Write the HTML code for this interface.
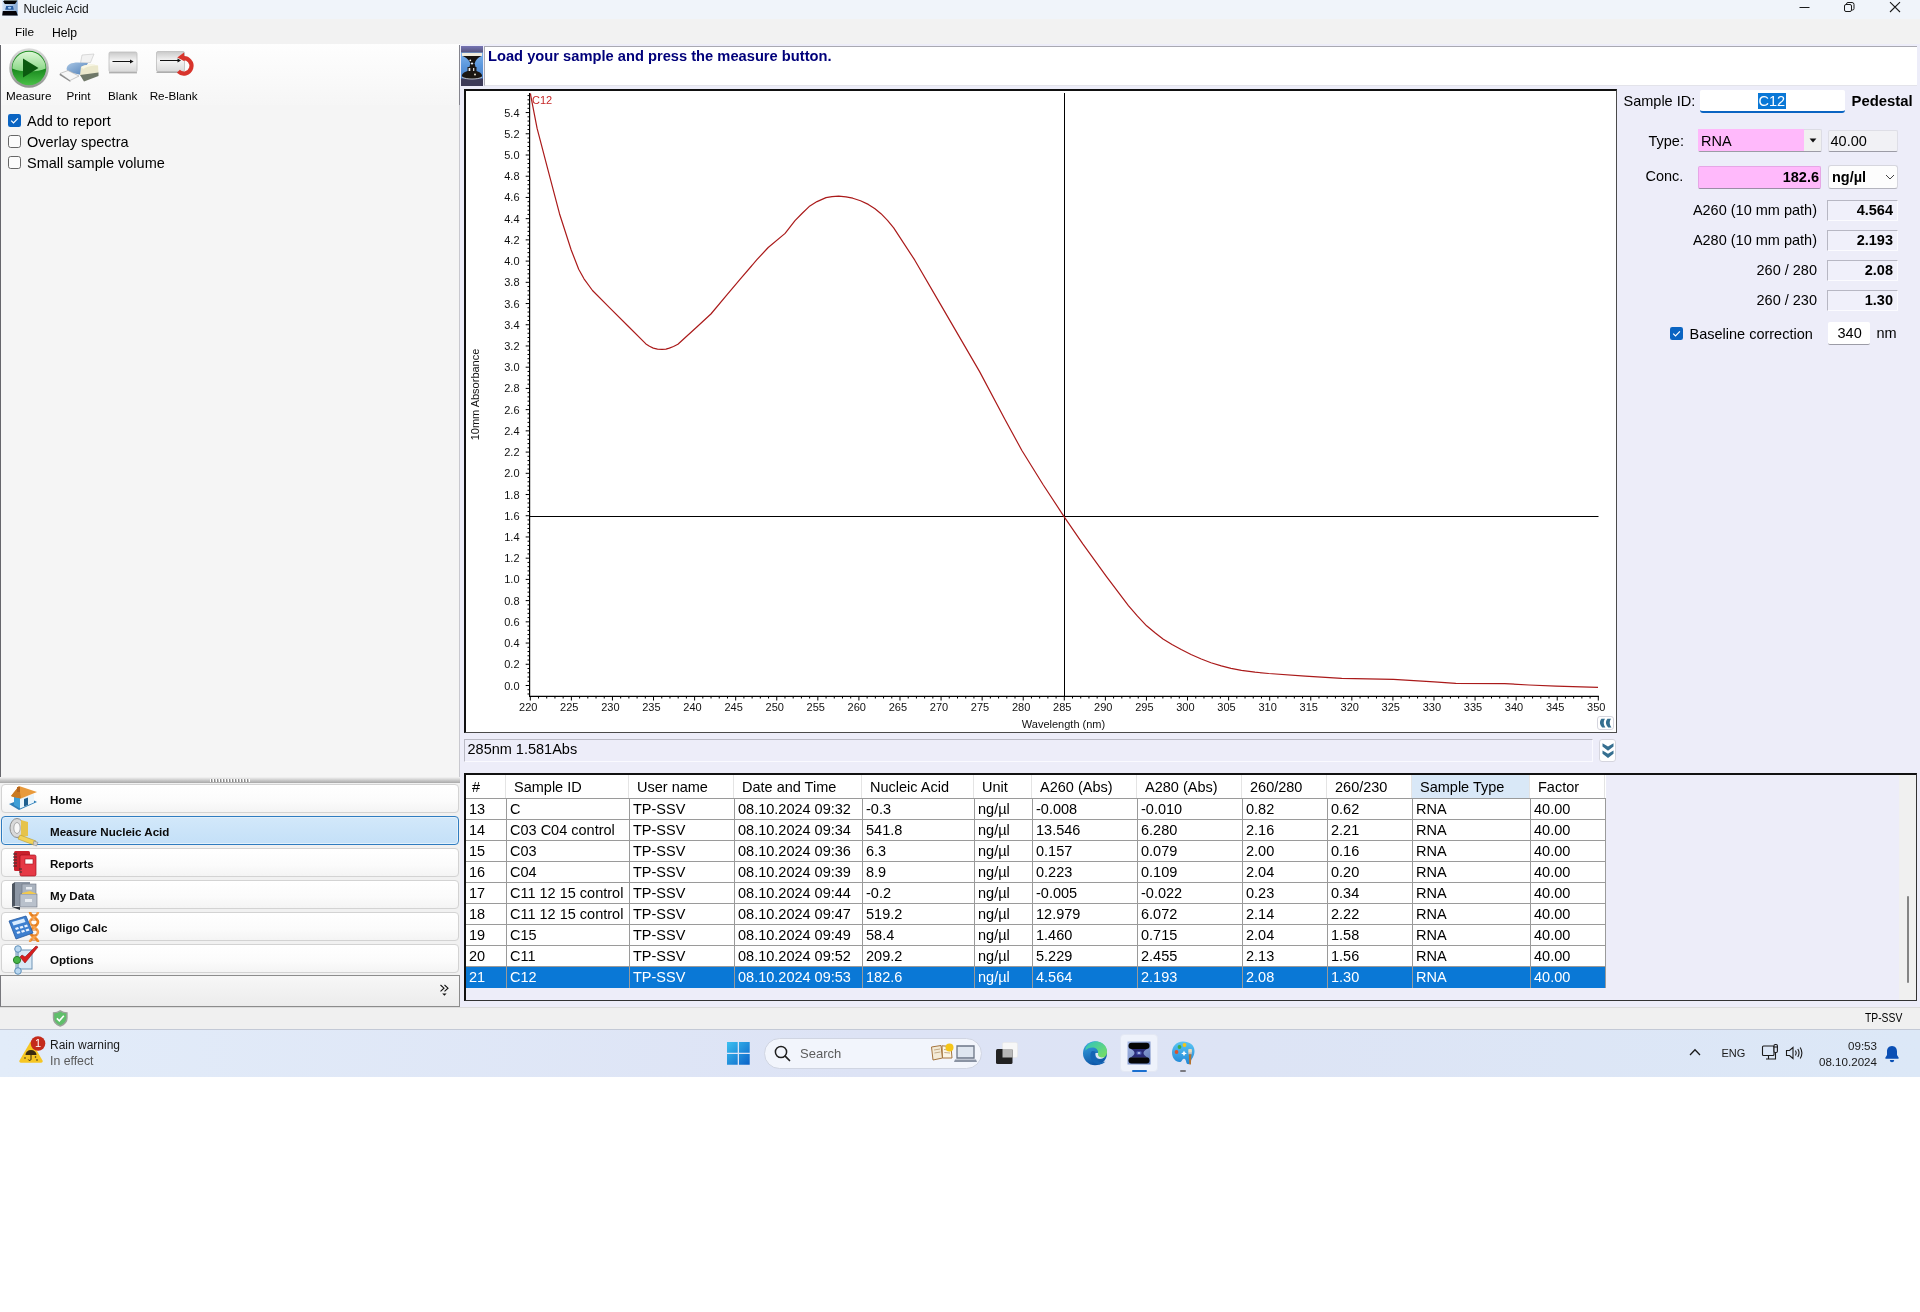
<!DOCTYPE html><html><head><meta charset="utf-8"><title>Nucleic Acid</title><style>
*{box-sizing:border-box;margin:0;padding:0}
html,body{width:1920px;height:1312px;background:#fff;overflow:hidden}
body{position:relative;font-family:"Liberation Sans",sans-serif;color:#000;}
.a{position:absolute}
.t{position:absolute;white-space:nowrap;line-height:1}
.ui{font-family:"Liberation Sans",sans-serif;font-size:12px;color:#000}
.ms{font-family:"Liberation Sans",sans-serif;font-size:14.5px;color:#000}
.b{font-weight:bold}
</style></head><body><div id="root" style="position:absolute;left:0;top:0;width:1920px;height:1312px;will-change:transform">
<div class="a" style="left:0;top:0;width:1920px;height:19px;background:#f0f4fa"></div>
<div class="a" style="left:0;top:19px;width:1920px;height:25px;background:#f2f2f2"></div>
<div class="a" style="left:0;top:44px;width:1920px;height:963px;background:#ededf9"></div>
<div class="a" style="left:0;top:44px;width:460px;height:963px;background:#f5f5f5"></div>
<div class="a" style="left:0;top:1007px;width:1920px;height:23px;background:#f0f0f0"></div>
<div class="a" style="left:0;top:1029px;width:1920px;height:48px;background:linear-gradient(90deg,#e2ecf9,#dde3f5 45%,#dde4f5 65%,#dce8f7);border-top:1px solid #c3c9d6"></div>
<svg class="a" style="left:2px;top:0" width="16" height="16" viewBox="0 0 16 16">
<defs><linearGradient id="ti" x1="0" y1="0" x2="1" y2="0"><stop offset="0" stop-color="#d3e4f8"/><stop offset="1" stop-color="#86a9d2"/></linearGradient></defs>
<rect x="0.300" y="0" width="15.400" height="15.600" fill="url(#ti)"/><rect x="2" y="0" width="13" height="1.200" fill="#6f7a78"/>
<path d="M1 1.100H15L13 3.900H2.800Z" fill="#050505"/>
<path d="M4.200 6.100H11L11.800 9.700H3.200Z" fill="#2a5ea2"/><ellipse cx="7.600" cy="7.800" rx="1.700" ry="1" fill="#aed6ff"/>
<path d="M0.800 10.900H14.200L15.800 15.600H0.200Z" fill="#04040a"/></svg>
<div class="t ui" style="left:23.4px;top:3px;font-size:12px;color:#111">Nucleic Acid</div>
<svg class="a" style="left:1790px;top:0" width="120" height="18" viewBox="0 0 120 18" fill="none" stroke="#1a1a1a" stroke-width="1">
<path d="M9.5 7.5H19.5"/>
<rect x="54.5" y="4.5" width="7" height="7" rx="1.5"/><path d="M56.5 4.5V4a1.5 1.5 0 0 1 1.5-1.5h4A2 2 0 0 1 64 4.5v4A1.5 1.5 0 0 1 62.5 10H62"/>
<path d="M100 2.2L110 12M110 2.2L100 12" stroke-width="1.1"/></svg>
<div class="t ui" style="left:15px;top:26.7px;font-size:11.8px">File</div>
<div class="t ui" style="left:52px;top:26.7px;font-size:12.2px">Help</div>
<div class="a" style="left:0;top:44px;width:460px;height:61px;background:linear-gradient(#fefefe,#f6f6f6)"></div>
<div class="a" style="left:0;top:45px;width:1px;height:732px;background:#66666c"></div>
<div class="a" style="left:459px;top:45px;width:1px;height:735px;background:#c9c9cf"></div>
<div class="a" style="left:459px;top:45px;width:1px;height:60px;background:#85858e"></div>
<svg class="a" style="left:8px;top:47px" width="42" height="42" viewBox="0 0 42 42">
<defs><linearGradient id="mg" x1="0" y1="0" x2="0" y2="1"><stop offset="0" stop-color="#1d8f20"/><stop offset="0.5" stop-color="#16851b"/><stop offset="1" stop-color="#48c046"/></linearGradient>
<linearGradient id="mt" x1="0" y1="0" x2="0" y2="1"><stop offset="0" stop-color="#dcf6d6"/><stop offset="1" stop-color="#86d682"/></linearGradient>
<linearGradient id="mr" x1="0" y1="0" x2="0" y2="1"><stop offset="0" stop-color="#dcdcdc"/><stop offset="1" stop-color="#8e948e"/></linearGradient></defs>
<circle cx="21" cy="21" r="19.800" fill="url(#mr)"/><circle cx="21" cy="21" r="17.200" fill="url(#mg)"/>
<path d="M4.300 21.500A16.700 16.700 0 0 1 37.700 21.500C30 25.500 12 25.500 4.300 21.500Z" fill="url(#mt)"/>
<path d="M15 11.500L30.500 21L15 30.500Z" fill="#0b5a10"/></svg>
<svg class="a" style="left:58px;top:52px" width="42" height="32" viewBox="0 0 42 32">
<defs><linearGradient id="pb" x1="0" y1="0" x2="1" y2="1"><stop offset="0" stop-color="#a9c6e4"/><stop offset="1" stop-color="#4f7fb8"/></linearGradient></defs>
<path d="M24 3L36 2L32.500 10.500L22.500 11Z" fill="#f2f2f2" stroke="#c4c4c4" stroke-width=".6"/>
<path d="M8.500 17C9 12.500 13 10.500 20 10.500L30 11L23.500 23L10 20Z" fill="url(#pb)"/>
<path d="M23 15C26 12.500 34 11.500 40 13.500L40.500 21L26 27L22 23Z" fill="#ebe8cc"/>
<path d="M23 15C26 12.500 34 11.500 40 13.500C35 13.200 28 14.500 25.500 17Z" fill="#f8f6e4"/>
<path d="M22 23L40.500 20.500V24L26 29.500Z" fill="#6f7868"/>
<path d="M2 21.500L10 18.500L21 24L12 28.500Z" fill="#f7f7f7" stroke="#b0b0b0" stroke-width=".7"/>
<path d="M2 21.500L12 28.500L12.500 30L1.500 23Z" fill="#8a8a8a"/></svg>
<svg class="a" style="left:107px;top:50px" width="34" height="26" viewBox="0 0 34 26">
<defs><linearGradient id="bg1" x1="0" y1="0" x2="0" y2="1"><stop offset="0" stop-color="#c9c9c9"/><stop offset="0.45" stop-color="#f4f4f4"/><stop offset="1" stop-color="#d9d9d9"/></linearGradient></defs>
<rect x="2" y="2" width="28" height="20" rx="1.5" fill="url(#bg1)" stroke="#bdbdbd" stroke-width=".8"/>
<path d="M2 22.8H30" stroke="#9a9a9a" stroke-width="1"/>
<path d="M5.5 11.5H24" stroke="#111" stroke-width="1"/><path d="M23 9.6L26.6 11.5L23 13.4Z" fill="#111"/></svg>
<svg class="a" style="left:154px;top:49px" width="44" height="30" viewBox="0 0 44 30">
<rect x="2.5" y="2.5" width="28" height="20" rx="1.5" fill="url(#bg1)" stroke="#bdbdbd" stroke-width=".8"/>
<path d="M2.5 23.3H30" stroke="#9a9a9a" stroke-width="1"/>
<path d="M6 11.5H24" stroke="#111" stroke-width="1"/><path d="M23.5 9.6L27 11.5L23.5 13.4Z" fill="#111"/>
<path d="M28.46 9.32A7.700 7.700 0 1 1 24.36 22.34" fill="none" stroke="#d8342c" stroke-width="4.200"/>
<path d="M23.300 8.400L30 3.600L30.600 12.200Z" fill="#d8342c"/></svg>
<div class="t ui" style="left:-11.3px;top:89.6px;width:80px;text-align:center;font-size:11.7px">Measure</div>
<div class="t ui" style="left:38.6px;top:89.6px;width:80px;text-align:center;font-size:11.7px">Print</div>
<div class="t ui" style="left:82.7px;top:89.6px;width:80px;text-align:center;font-size:11.7px">Blank</div>
<div class="t ui" style="left:133.7px;top:89.6px;width:80px;text-align:center;font-size:11.7px">Re-Blank</div>
<svg class="a" style="left:8px;top:114.2px" width="13" height="13" viewBox="0 0 13 13"><rect x="0" y="0" width="13" height="13" rx="2.2" fill="#0a64c2"/><path d="M3.2 6.7L5.5 9L9.9 4.3" fill="none" stroke="#fff" stroke-width="1.2"/></svg>
<svg class="a" style="left:8px;top:135.2px" width="13" height="13" viewBox="0 0 13 13"><rect x="0.5" y="0.5" width="12" height="12" rx="2.2" fill="#fbfbfb" stroke="#666"/></svg>
<svg class="a" style="left:8px;top:156.2px" width="13" height="13" viewBox="0 0 13 13"><rect x="0.5" y="0.5" width="12" height="12" rx="2.2" fill="#fbfbfb" stroke="#666"/></svg>
<div class="t ms" style="left:27px;top:113.5px">Add to report</div>
<div class="t ms" style="left:27px;top:134.5px">Overlay spectra</div>
<div class="t ms" style="left:27px;top:155.5px">Small sample volume</div>
<div class="a" style="left:0;top:777px;width:460px;height:6px;background:linear-gradient(#f5f5f5,#c9c9c9 55%,#a8a8a8)"></div>
<div class="a" style="left:210px;top:779px;width:40px;height:3px;background:repeating-linear-gradient(90deg,#fff 0 1px,#8a8a8a 1px 2px,transparent 2px 3px)"></div>
<div class="a" style="left:0px;top:783px;width:460px;height:193px;background:#f1f1f1"></div>
<div class="a" style="left:1px;top:784px;width:458px;height:29px;border-radius:4px;background:linear-gradient(#ffffff,#fbfbfb 60%,#f4f4f4);border:1px solid #d3d3d3"><svg class="a" style="left:5px;top:-1px" width="32" height="30" viewBox="0 0 32 30">
<path d="M2 20L12 26L30 18L20 13Z" fill="#2f7fb8"/><path d="M7 12V21L13 24.5V14Z" fill="#3f9fd6"/><path d="M13 14V24.5L27 18.5V10Z" fill="#e9f4fb"/>
<path d="M4 12L12 2L30 8L14 14.5Z" fill="#e89a3c"/><path d="M4 12L12 2L14 14.5L6 13Z" fill="#c97a22"/>
<rect x="10" y="3" width="3" height="5" fill="#b5651d"/><path d="M17 15L21 13.5V21L17 22.5Z" fill="#1f5f8f"/></svg><div class="t b" style="left:48px;top:9px;font-size:11.6px;color:#0a0a0a">Home</div></div>
<div class="a" style="left:1px;top:816px;width:458px;height:29px;border-radius:4px;background:linear-gradient(#d2e8fa,#c4e0f8);border:1px solid #2f7cc0;box-shadow:inset 0 0 0 1px #e2f1fc"><svg class="a" style="left:6px;top:0px" width="34" height="30" viewBox="0 0 34 30">
<ellipse cx="9" cy="11" rx="7" ry="9.5" fill="#d9d9d9" stroke="#8d8d8d"/><ellipse cx="9" cy="11" rx="3.2" ry="5.5" fill="#f7f7f7" stroke="#aaa"/>
<path d="M13 3L20 5V19L13 20Z" fill="#e6c34a"/><path d="M12 18L28 24L26 28L10 22Z" fill="#f2d35a" stroke="#b89a2a" stroke-width=".6"/>
<path d="M26 24L30 25.5L28.5 29L25 27.5Z" fill="#cfcfcf" stroke="#888" stroke-width=".6"/></svg><div class="t b" style="left:48px;top:9px;font-size:11.6px;color:#0a0a0a">Measure Nucleic Acid</div></div>
<div class="a" style="left:1px;top:848px;width:458px;height:29px;border-radius:4px;background:linear-gradient(#ffffff,#fbfbfb 60%,#f4f4f4);border:1px solid #d3d3d3"><svg class="a" style="left:9px;top:1px" width="28" height="28" viewBox="0 0 28 28">
<rect x="3" y="1" width="16" height="20" rx="1.5" fill="#c8202c"/><rect x="9" y="5" width="16" height="21" rx="1.5" fill="#e63946" stroke="#a0101c" stroke-width=".7"/>
<rect x="14" y="9" width="8" height="5" fill="#fff" stroke="#a0101c" stroke-width=".6"/>
<path d="M2 4H6M2 7H6M2 10H6M2 13H6M2 16H6M8 19H11M8 22H11" stroke="#333" stroke-width="1"/></svg><div class="t b" style="left:48px;top:9px;font-size:11.6px;color:#0a0a0a">Reports</div></div>
<div class="a" style="left:1px;top:880px;width:458px;height:29px;border-radius:4px;background:linear-gradient(#ffffff,#fbfbfb 60%,#f4f4f4);border:1px solid #d3d3d3"><svg class="a" style="left:8px;top:0px" width="30" height="30" viewBox="0 0 30 30">
<path d="M5 1H20V26L5 25Z" fill="#8d97a5"/><path d="M5 1L2 3V26L5 25Z" fill="#4d5560"/>
<rect x="12" y="3" width="14" height="10" fill="#aab3bf" stroke="#6b7480" stroke-width=".6"/><rect x="16" y="6" width="6" height="2.5" fill="#e9edf2"/>
<rect x="10" y="13" width="17" height="13" fill="#b9c1cc" stroke="#6b7480" stroke-width=".6"/><path d="M12 12L20 10L27 13H12Z" fill="#f2c94c"/>
<rect x="15" y="18" width="7" height="3" fill="#e9edf2"/><path d="M2 26L10 29V26" fill="#30363d"/></svg><div class="t b" style="left:48px;top:9px;font-size:11.6px;color:#0a0a0a">My Data</div></div>
<div class="a" style="left:1px;top:912px;width:458px;height:29px;border-radius:4px;background:linear-gradient(#ffffff,#fbfbfb 60%,#f4f4f4);border:1px solid #d3d3d3"><svg class="a" style="left:6px;top:-2px" width="32" height="32" viewBox="0 0 32 32">
<path d="M22 1C22 6 30 6 30 11S22 16 22 21S30 26 30 31" fill="none" stroke="#f08a24" stroke-width="2.6"/><path d="M30 1C30 6 22 6 22 11S30 16 30 21S22 26 22 31" fill="none" stroke="#f5a04a" stroke-width="2.4"/><path d="M23 4H29M23 9H29M23 14H29M23 19H29M23 24H29M23 29H29" stroke="#d9731a" stroke-width="1"/>
<path d="M1 10L18 5L25 22L8 28Z" fill="#3d7fcf" stroke="#2458a0" stroke-width=".8"/><path d="M4 11L16 7.5L17.5 11L5.5 14.5Z" fill="#d9ecff"/>
<path d="M7 17l3-1 1 2-3 1zM11.5 15.7l3-1 1 2-3 1zM16 14.4l3-1 1 2-3 1zM8.5 21l3-1 1 2-3 1zM13 19.7l3-1 1 2-3 1zM17.5 18.4l3-1 1 2-3 1z" fill="#eaf3ff"/></svg><div class="t b" style="left:48px;top:9px;font-size:11.6px;color:#0a0a0a">Oligo Calc</div></div>
<div class="a" style="left:1px;top:944px;width:458px;height:29px;border-radius:4px;background:linear-gradient(#ffffff,#fbfbfb 60%,#f4f4f4);border:1px solid #d3d3d3"><svg class="a" style="left:6.5px;top:-1px" width="32" height="32" viewBox="0 0 32 32">
<rect x="7" y="6" width="16" height="19" fill="#d8e8f5" stroke="#6f94b5"/><path d="M9 4V28" stroke="#6f94b5" stroke-width="1.2"/>
<circle cx="9" cy="5" r="3.3" fill="#b9d7f0" stroke="#5f8fb8"/><circle cx="9" cy="27" r="3.3" fill="#b9d7f0" stroke="#5f8fb8"/><circle cx="8" cy="16" r="3.6" fill="#47b648" stroke="#2a7f2c"/>
<path d="M11 13L16 19L29 3L27 2L16 13L13 11Z" fill="#d81e1e" stroke="#8f0f0f" stroke-width=".6"/></svg><div class="t b" style="left:48px;top:9px;font-size:11.6px;color:#0a0a0a">Options</div></div>
<div class="a" style="left:0;top:975px;width:460px;height:32px;background:linear-gradient(#f7f7f7,#ececec);border:1px solid #8c8c8c;border-left:1px solid #77777c"></div>
<svg class="a" style="left:438px;top:983px" width="14" height="14" viewBox="0 0 14 14"><path d="M2.5 2L6 5.2L2.5 8.4M6.5 2L10 5.2L6.5 8.4" fill="none" stroke="#111" stroke-width="1.1"/><path d="M4.2 10.5H8.6L6.4 12.8Z" fill="#111"/></svg>
<div class="a" style="left:484px;top:46px;width:1433px;height:40px;background:#fff;border-top:1px solid #a9a9b2;border-left:1px solid #a9a9b2;border-bottom:1px solid #e3e3ea"></div>
<svg class="a" style="left:461px;top:46px" width="22" height="40" viewBox="0 0 22 40">
<defs><linearGradient id="pi" x1="0" y1="0" x2="0" y2="1"><stop offset="0" stop-color="#8fc0f2"/><stop offset="0.5" stop-color="#5b97dc"/><stop offset="1" stop-color="#3f74bf"/></linearGradient>
<linearGradient id="pt" x1="0" y1="0" x2="0" y2="1"><stop offset="0" stop-color="#7674b4"/><stop offset="1" stop-color="#55547c"/></linearGradient></defs>
<rect width="22" height="40" fill="url(#pi)"/><rect width="22" height="6.500" fill="url(#pt)"/><rect y="32.500" width="22" height="7.500" fill="#3c3a58"/>
<rect x="1" y="7" width="20" height="3" fill="#f1ecdc"/>
<path d="M1.500 10H20.500C17 11.500 14.500 14 13.700 17.500H9.300C8.500 14 5 11.500 1.500 10Z" fill="#16120e"/>
<path d="M9.300 17.500H13.700L14.500 21H15.500V25C19 26 21.500 28 21 30.500C20 32.500 16 33 11 33C6 33 2 32.500 1 30.500C0.500 28 3 26 6.500 25V21H8.500Z" fill="#1a1612"/>
<circle cx="9.300" cy="14.300" r="0.900" fill="#fff"/><circle cx="11" cy="17.500" r="1.100" fill="#e8eef6"/><rect x="7.600" y="22" width="1.700" height="3" fill="#f2f2f2"/><rect x="12" y="22" width="1.300" height="3" fill="#cfcfcf"/><circle cx="14" cy="28.500" r="0.900" fill="#f6f0d8"/>
<path d="M1 31C3 32.500 7 33 11 33C15 33 19 32.500 21 31" fill="none" stroke="#dfe6ee" stroke-width="0.800"/></svg>
<div class="t b" style="left:488px;top:47.8px;font-size:15.2px;color:#00007a;transform:scaleX(.967);transform-origin:0 0">Load your sample and press the measure button.</div>
<div class="a" style="left:464px;top:89px;width:1153px;height:644px;background:#fff;border:2px solid #111;border-right:1px solid #4a4a4a;border-bottom:1px solid #4a4a4a"></div>
<svg class="a" style="left:0;top:0" width="1920" height="760" viewBox="0 0 1920 760" font-family="Liberation Sans, sans-serif" font-size="11" fill="#111">
<path d="M529.6 93V696.3H1598.9" fill="none" stroke="#000" stroke-width="1.2"/>
<path d="M529.3 693.99h-1.8M529.3 689.74h-1.8M529.3 685.50h-3.6M529.3 681.26h-1.8M529.3 677.01h-1.8M529.3 672.77h-1.8M529.3 668.52h-1.8M529.3 664.28h-3.6M529.3 660.04h-1.8M529.3 655.79h-1.8M529.3 651.55h-1.8M529.3 647.30h-1.8M529.3 643.06h-3.6M529.3 638.82h-1.8M529.3 634.57h-1.8M529.3 630.33h-1.8M529.3 626.08h-1.8M529.3 621.84h-3.6M529.3 617.60h-1.8M529.3 613.35h-1.8M529.3 609.11h-1.8M529.3 604.86h-1.8M529.3 600.62h-3.6M529.3 596.38h-1.8M529.3 592.13h-1.8M529.3 587.89h-1.8M529.3 583.64h-1.8M529.3 579.40h-3.6M529.3 575.16h-1.8M529.3 570.91h-1.8M529.3 566.67h-1.8M529.3 562.42h-1.8M529.3 558.18h-3.6M529.3 553.94h-1.8M529.3 549.69h-1.8M529.3 545.45h-1.8M529.3 541.20h-1.8M529.3 536.96h-3.6M529.3 532.72h-1.8M529.3 528.47h-1.8M529.3 524.23h-1.8M529.3 519.98h-1.8M529.3 515.74h-3.6M529.3 511.50h-1.8M529.3 507.25h-1.8M529.3 503.01h-1.8M529.3 498.76h-1.8M529.3 494.52h-3.6M529.3 490.28h-1.8M529.3 486.03h-1.8M529.3 481.79h-1.8M529.3 477.54h-1.8M529.3 473.30h-3.6M529.3 469.06h-1.8M529.3 464.81h-1.8M529.3 460.57h-1.8M529.3 456.32h-1.8M529.3 452.08h-3.6M529.3 447.84h-1.8M529.3 443.59h-1.8M529.3 439.35h-1.8M529.3 435.10h-1.8M529.3 430.86h-3.6M529.3 426.62h-1.8M529.3 422.37h-1.8M529.3 418.13h-1.8M529.3 413.88h-1.8M529.3 409.64h-3.6M529.3 405.40h-1.8M529.3 401.15h-1.8M529.3 396.91h-1.8M529.3 392.66h-1.8M529.3 388.42h-3.6M529.3 384.18h-1.8M529.3 379.93h-1.8M529.3 375.69h-1.8M529.3 371.44h-1.8M529.3 367.20h-3.6M529.3 362.96h-1.8M529.3 358.71h-1.8M529.3 354.47h-1.8M529.3 350.22h-1.8M529.3 345.98h-3.6M529.3 341.74h-1.8M529.3 337.49h-1.8M529.3 333.25h-1.8M529.3 329.00h-1.8M529.3 324.76h-3.6M529.3 320.52h-1.8M529.3 316.27h-1.8M529.3 312.03h-1.8M529.3 307.78h-1.8M529.3 303.54h-3.6M529.3 299.30h-1.8M529.3 295.05h-1.8M529.3 290.81h-1.8M529.3 286.56h-1.8M529.3 282.32h-3.6M529.3 278.08h-1.8M529.3 273.83h-1.8M529.3 269.59h-1.8M529.3 265.34h-1.8M529.3 261.10h-3.6M529.3 256.86h-1.8M529.3 252.61h-1.8M529.3 248.37h-1.8M529.3 244.12h-1.8M529.3 239.88h-3.6M529.3 235.64h-1.8M529.3 231.39h-1.8M529.3 227.15h-1.8M529.3 222.90h-1.8M529.3 218.66h-3.6M529.3 214.42h-1.8M529.3 210.17h-1.8M529.3 205.93h-1.8M529.3 201.68h-1.8M529.3 197.44h-3.6M529.3 193.20h-1.8M529.3 188.95h-1.8M529.3 184.71h-1.8M529.3 180.46h-1.8M529.3 176.22h-3.6M529.3 171.98h-1.8M529.3 167.73h-1.8M529.3 163.49h-1.8M529.3 159.24h-1.8M529.3 155.00h-3.6M529.3 150.76h-1.8M529.3 146.51h-1.8M529.3 142.27h-1.8M529.3 138.02h-1.8M529.3 133.78h-3.6M529.3 129.54h-1.8M529.3 125.29h-1.8M529.3 121.05h-1.8M529.3 116.80h-1.8M529.3 112.56h-3.6M529.3 108.32h-1.8M529.3 104.07h-1.8M529.3 99.83h-1.8M529.3 95.58h-1.8" stroke="#000" stroke-width="1" fill="none"/>
<text x="519.5" y="689.5" text-anchor="end">0.0</text>
<text x="519.5" y="668.3" text-anchor="end">0.2</text>
<text x="519.5" y="647.1" text-anchor="end">0.4</text>
<text x="519.5" y="625.8" text-anchor="end">0.6</text>
<text x="519.5" y="604.6" text-anchor="end">0.8</text>
<text x="519.5" y="583.4" text-anchor="end">1.0</text>
<text x="519.5" y="562.2" text-anchor="end">1.2</text>
<text x="519.5" y="541.0" text-anchor="end">1.4</text>
<text x="519.5" y="519.7" text-anchor="end">1.6</text>
<text x="519.5" y="498.5" text-anchor="end">1.8</text>
<text x="519.5" y="477.3" text-anchor="end">2.0</text>
<text x="519.5" y="456.1" text-anchor="end">2.2</text>
<text x="519.5" y="434.9" text-anchor="end">2.4</text>
<text x="519.5" y="413.6" text-anchor="end">2.6</text>
<text x="519.5" y="392.4" text-anchor="end">2.8</text>
<text x="519.5" y="371.2" text-anchor="end">3.0</text>
<text x="519.5" y="350.0" text-anchor="end">3.2</text>
<text x="519.5" y="328.8" text-anchor="end">3.4</text>
<text x="519.5" y="307.5" text-anchor="end">3.6</text>
<text x="519.5" y="286.3" text-anchor="end">3.8</text>
<text x="519.5" y="265.1" text-anchor="end">4.0</text>
<text x="519.5" y="243.9" text-anchor="end">4.2</text>
<text x="519.5" y="222.7" text-anchor="end">4.4</text>
<text x="519.5" y="201.4" text-anchor="end">4.6</text>
<text x="519.5" y="180.2" text-anchor="end">4.8</text>
<text x="519.5" y="159.0" text-anchor="end">5.0</text>
<text x="519.5" y="137.8" text-anchor="end">5.2</text>
<text x="519.5" y="116.6" text-anchor="end">5.4</text>
<path d="M530.30 696.3v4.2M538.52 696.3v2.2M546.73 696.3v2.2M554.95 696.3v2.2M563.16 696.3v2.2M571.38 696.3v4.2M579.59 696.3v2.2M587.81 696.3v2.2M596.02 696.3v2.2M604.24 696.3v2.2M612.45 696.3v4.2M620.67 696.3v2.2M628.88 696.3v2.2M637.10 696.3v2.2M645.32 696.3v2.2M653.53 696.3v4.2M661.75 696.3v2.2M669.96 696.3v2.2M678.18 696.3v2.2M686.39 696.3v2.2M694.61 696.3v4.2M702.82 696.3v2.2M711.04 696.3v2.2M719.25 696.3v2.2M727.47 696.3v2.2M735.68 696.3v4.2M743.90 696.3v2.2M752.12 696.3v2.2M760.33 696.3v2.2M768.55 696.3v2.2M776.76 696.3v4.2M784.98 696.3v2.2M793.19 696.3v2.2M801.41 696.3v2.2M809.62 696.3v2.2M817.84 696.3v4.2M826.05 696.3v2.2M834.27 696.3v2.2M842.48 696.3v2.2M850.70 696.3v2.2M858.92 696.3v4.2M867.13 696.3v2.2M875.35 696.3v2.2M883.56 696.3v2.2M891.78 696.3v2.2M899.99 696.3v4.2M908.21 696.3v2.2M916.42 696.3v2.2M924.64 696.3v2.2M932.85 696.3v2.2M941.07 696.3v4.2M949.28 696.3v2.2M957.50 696.3v2.2M965.72 696.3v2.2M973.93 696.3v2.2M982.15 696.3v4.2M990.36 696.3v2.2M998.58 696.3v2.2M1006.79 696.3v2.2M1015.01 696.3v2.2M1023.22 696.3v4.2M1031.44 696.3v2.2M1039.65 696.3v2.2M1047.87 696.3v2.2M1056.08 696.3v2.2M1064.30 696.3v4.2M1072.52 696.3v2.2M1080.73 696.3v2.2M1088.95 696.3v2.2M1097.16 696.3v2.2M1105.38 696.3v4.2M1113.59 696.3v2.2M1121.81 696.3v2.2M1130.02 696.3v2.2M1138.24 696.3v2.2M1146.45 696.3v4.2M1154.67 696.3v2.2M1162.88 696.3v2.2M1171.10 696.3v2.2M1179.32 696.3v2.2M1187.53 696.3v4.2M1195.75 696.3v2.2M1203.96 696.3v2.2M1212.18 696.3v2.2M1220.39 696.3v2.2M1228.61 696.3v4.2M1236.82 696.3v2.2M1245.04 696.3v2.2M1253.25 696.3v2.2M1261.47 696.3v2.2M1269.68 696.3v4.2M1277.90 696.3v2.2M1286.12 696.3v2.2M1294.33 696.3v2.2M1302.55 696.3v2.2M1310.76 696.3v4.2M1318.98 696.3v2.2M1327.19 696.3v2.2M1335.41 696.3v2.2M1343.62 696.3v2.2M1351.84 696.3v4.2M1360.05 696.3v2.2M1368.27 696.3v2.2M1376.48 696.3v2.2M1384.70 696.3v2.2M1392.92 696.3v4.2M1401.13 696.3v2.2M1409.35 696.3v2.2M1417.56 696.3v2.2M1425.78 696.3v2.2M1433.99 696.3v4.2M1442.21 696.3v2.2M1450.42 696.3v2.2M1458.64 696.3v2.2M1466.85 696.3v2.2M1475.07 696.3v4.2M1483.28 696.3v2.2M1491.50 696.3v2.2M1499.72 696.3v2.2M1507.93 696.3v2.2M1516.15 696.3v4.2M1524.36 696.3v2.2M1532.58 696.3v2.2M1540.79 696.3v2.2M1549.01 696.3v2.2M1557.22 696.3v4.2M1565.44 696.3v2.2M1573.65 696.3v2.2M1581.87 696.3v2.2M1590.08 696.3v2.2M1598.30 696.3v4.2" stroke="#000" stroke-width="1" fill="none"/>
<text x="528.2" y="711" text-anchor="middle">220</text>
<text x="569.3" y="711" text-anchor="middle">225</text>
<text x="610.4" y="711" text-anchor="middle">230</text>
<text x="651.4" y="711" text-anchor="middle">235</text>
<text x="692.5" y="711" text-anchor="middle">240</text>
<text x="733.6" y="711" text-anchor="middle">245</text>
<text x="774.7" y="711" text-anchor="middle">250</text>
<text x="815.7" y="711" text-anchor="middle">255</text>
<text x="856.8" y="711" text-anchor="middle">260</text>
<text x="897.9" y="711" text-anchor="middle">265</text>
<text x="939.0" y="711" text-anchor="middle">270</text>
<text x="980.0" y="711" text-anchor="middle">275</text>
<text x="1021.1" y="711" text-anchor="middle">280</text>
<text x="1062.2" y="711" text-anchor="middle">285</text>
<text x="1103.3" y="711" text-anchor="middle">290</text>
<text x="1144.4" y="711" text-anchor="middle">295</text>
<text x="1185.4" y="711" text-anchor="middle">300</text>
<text x="1226.5" y="711" text-anchor="middle">305</text>
<text x="1267.6" y="711" text-anchor="middle">310</text>
<text x="1308.7" y="711" text-anchor="middle">315</text>
<text x="1349.7" y="711" text-anchor="middle">320</text>
<text x="1390.8" y="711" text-anchor="middle">325</text>
<text x="1431.9" y="711" text-anchor="middle">330</text>
<text x="1473.0" y="711" text-anchor="middle">335</text>
<text x="1514.0" y="711" text-anchor="middle">340</text>
<text x="1555.1" y="711" text-anchor="middle">345</text>
<text x="1596.2" y="711" text-anchor="middle">350</text>
<text x="1063.5" y="727.5" text-anchor="middle">Wavelength (nm)</text>
<text transform="translate(478.5,394.5) rotate(-90)" text-anchor="middle">10mm Absorbance</text>
<path d="M1064.5 93V696M530 516.5H1598.5" stroke="#000" stroke-width="1" fill="none"/>
<polyline points="530.5,93.5 530.7,95.3 537.1,128.4 547.7,168.9 559.5,213.7 571.2,250.0 578.7,269.2 584.0,278.8 592.5,290.5 610.0,308.2 627.7,325.7 645.9,343.9 649.5,346.3 653.3,348.1 657.5,349.1 661.9,349.4 666.0,349.1 669.3,348.1 673.5,346.5 677.9,344.3 697.1,326.8 710.9,314.0 726.9,294.8 740.0,279.4 756.9,259.7 768.2,247.5 785.1,233.4 795.0,220.7 802.0,213.5 809.1,206.6 817.0,201.6 826.0,197.6 832.0,196.6 838.7,196.2 846.0,196.8 852.8,198.2 860.5,200.8 868.3,204.4 875.0,208.8 881.0,213.7 887.5,220.3 893.7,227.8 914.8,260.2 940.2,303.9 979.6,371.6 1005.0,419.5 1021.9,450.5 1043.0,484.5 1064.2,516.8 1082.8,543.8 1106.5,576.6 1128.4,605.7 1137.5,616.2 1146.6,625.8 1155.0,632.8 1163.0,638.9 1172.0,644.5 1181.2,649.5 1191.0,654.5 1201.3,659.0 1211.0,662.7 1221.3,665.9 1231.0,668.4 1241.4,670.4 1255.0,672.2 1268.7,673.5 1305.2,676.1 1341.7,678.3 1393.5,679.3 1434.2,681.9 1455.8,683.3 1504.6,683.6 1529.0,685.0 1556.0,686.1 1598.0,687.3" fill="none" stroke="#aa1a1a" stroke-width="1.2" stroke-linejoin="round"/>
<text x="532" y="103.5" fill="#c62828">C12</text>
</svg>
<div class="a" style="left:1596.5px;top:715.5px;width:17px;height:14.5px;background:#fff;border:1px solid #d5d5de;border-radius:3px"></div>
<svg class="a" style="left:1597.5px;top:716.5px" width="15" height="13" viewBox="0 0 15 13"><path d="M7 1.8C5.2 4.2 5.2 7.6 7.4 10.4L4.2 10.4C1.4 7.6 1.4 4.2 3.4 1.8ZM13 1.8C11.2 4.2 11.2 7.600 13.400 10.400L10.200 10.400C7.400 7.600 7.400 4.200 9.400 1.800Z" fill="#356f90"/></svg>
<div class="a" style="left:1599px;top:738.5px;width:17px;height:23.500px;background:#fff;border:1px solid #d5d5de;border-radius:3px"></div>
<svg class="a" style="left:1600.5px;top:739.5px" width="14" height="21" viewBox="0 0 14 21"><path d="M1.500 3.200L7 6.600L12.500 3.200V6.600L7 10.800L1.500 6.600ZM1.500 10.400L7 13.800L12.500 10.400V13.800L7 18L1.500 13.800Z" fill="#356f90"/></svg>
<div class="a ms" style="left:464px;top:739px;width:1129px;height:23px;border:1px solid #b9b9c4;border-right-color:#fafaff;border-bottom-color:#fafaff;background:#ededf9"></div>
<div class="t ms" style="left:467.5px;top:742px">285nm 1.581Abs</div>
<div class="t ms" style="left:1623.5px;top:94px;font-size:14.5px;color:#000">Sample ID:</div>
<div class="a" style="left:1700px;top:90px;width:145px;height:23px;background:#fff;border-bottom:2px solid #0a64c2;border-radius:2px 2px 3px 3px"></div>
<div class="a" style="left:1758px;top:92.5px;width:28px;height:16.5px;background:#0a78d6"></div>
<div class="t ms" style="left:1758.5px;top:94px;font-size:14.5px;color:#fff">C12</div>
<div class="t ms b" style="left:1851.5px;top:93.8px;font-size:14.85px;color:#000">Pedestal</div>
<div class="t ms" style="left:1648.5px;top:134px;font-size:14.5px;color:#000">Type:</div>
<div class="a" style="left:1698px;top:129px;width:124px;height:23px;background:#f0f0f0;border:1px solid #dcdce4;border-bottom-color:#9c9ca6;border-radius:2px"></div>
<div class="a" style="left:1698px;top:129px;width:106px;height:22px;background:#ffb9fb"></div>
<div class="t ms" style="left:1701px;top:134px;font-size:14.5px;color:#000">RNA</div>
<svg class="a" style="left:1809px;top:138px" width="8" height="5" viewBox="0 0 8 5"><path d="M0.6 0.6H7.4L4 4.4Z" fill="#111"/></svg>
<div class="a" style="left:1828px;top:130px;width:70px;height:22px;background:#f1f1f5;border:1px solid #dedee6;border-bottom-color:#9c9ca6;border-radius:2px"></div>
<div class="t ms" style="left:1830.5px;top:134px;font-size:14.5px;color:#000">40.00</div>
<div class="t ms" style="left:1645.5px;top:169px;font-size:14.5px;color:#000">Conc.</div>
<div class="a" style="left:1698px;top:166px;width:123px;height:22.5px;background:#ffb9fb;border:1px solid #e6a6e6;border-bottom-color:#9c8ca6;border-radius:2px"></div>
<div class="t ms b" style="right:101px;top:170px;font-size:14.5px">182.6</div>
<div class="a" style="left:1828px;top:165px;width:70px;height:24px;background:#fdfdfd;border:1px solid #d6d6de;border-bottom-color:#b4b4be;border-radius:3px"></div>
<div class="t ms b" style="left:1832px;top:170px;font-size:14.5px;color:#000">ng/µl</div>
<svg class="a" style="left:1885px;top:174px" width="10" height="6" viewBox="0 0 10 6"><path d="M1 1L5 5L9 1" fill="none" stroke="#444" stroke-width="1"/></svg>
<div class="t ms" style="right:103px;top:203px;font-size:14.5px">A260 (10 mm path)</div>
<div class="a" style="left:1827px;top:200px;width:71px;height:20.5px;background:#f0f0fa;border:1px solid #b7b7c3;border-right-color:#fbfbff;border-bottom-color:#fbfbff;"></div>
<div class="t ms b" style="right:27px;top:202.7px;font-size:14.5px">4.564</div>
<div class="t ms" style="right:103px;top:233px;font-size:14.5px">A280 (10 mm path)</div>
<div class="a" style="left:1827px;top:230px;width:71px;height:20.5px;background:#f0f0fa;border:1px solid #b7b7c3;border-right-color:#fbfbff;border-bottom-color:#fbfbff;"></div>
<div class="t ms b" style="right:27px;top:232.7px;font-size:14.5px">2.193</div>
<div class="t ms" style="right:103px;top:263px;font-size:14.5px">260 / 280</div>
<div class="a" style="left:1827px;top:260px;width:71px;height:20.5px;background:#f0f0fa;border:1px solid #b7b7c3;border-right-color:#fbfbff;border-bottom-color:#fbfbff;"></div>
<div class="t ms b" style="right:27px;top:262.7px;font-size:14.5px">2.08</div>
<div class="t ms" style="right:103px;top:293px;font-size:14.5px">260 / 230</div>
<div class="a" style="left:1827px;top:290px;width:71px;height:20.5px;background:#f0f0fa;border:1px solid #b7b7c3;border-right-color:#fbfbff;border-bottom-color:#fbfbff;"></div>
<div class="t ms b" style="right:27px;top:292.7px;font-size:14.5px">1.30</div>
<svg class="a" style="left:1670px;top:327px" width="13" height="13" viewBox="0 0 13 13"><rect x="0" y="0" width="13" height="13" rx="2.2" fill="#0a64c2"/><path d="M3.2 6.7L5.5 9L9.9 4.3" fill="none" stroke="#fff" stroke-width="1.2"/></svg>
<div class="t ms" style="left:1689.5px;top:327px;font-size:14.5px;color:#000">Baseline correction</div>
<div class="a" style="left:1828px;top:322px;width:42px;height:23px;background:#fff;border-bottom:1px solid #9c9ca6;border-radius:2px"></div>
<div class="t ms" style="left:1837.5px;top:326px;font-size:14.5px;color:#000">340</div>
<div class="t ms" style="left:1876.5px;top:326px;font-size:14.5px;color:#000">nm</div>
<div class="a" style="left:464px;top:773px;width:1453px;height:228px;background:#ededf9;border:2px solid #111;border-right:1px solid #333;border-bottom:1px solid #333"></div>
<div class="a" style="left:466px;top:775px;width:1140px;height:213px;background:#fff"></div>
<div class="a" style="left:466px;top:775px;width:40px;height:23px;background:#fff;border-right:1px solid #e4e4e4"></div>
<div class="t ms" style="left:472px;top:779.5px">#</div>
<div class="a" style="left:506px;top:775px;width:123px;height:23px;background:#fff;border-right:1px solid #e4e4e4"></div>
<div class="t ms" style="left:514px;top:779.5px">Sample ID</div>
<div class="a" style="left:629px;top:775px;width:105px;height:23px;background:#fff;border-right:1px solid #e4e4e4"></div>
<div class="t ms" style="left:637px;top:779.5px">User name</div>
<div class="a" style="left:734px;top:775px;width:128px;height:23px;background:#fff;border-right:1px solid #e4e4e4"></div>
<div class="t ms" style="left:742px;top:779.5px">Date and Time</div>
<div class="a" style="left:862px;top:775px;width:112px;height:23px;background:#fff;border-right:1px solid #e4e4e4"></div>
<div class="t ms" style="left:870px;top:779.5px">Nucleic Acid</div>
<div class="a" style="left:974px;top:775px;width:58px;height:23px;background:#fff;border-right:1px solid #e4e4e4"></div>
<div class="t ms" style="left:982px;top:779.5px">Unit</div>
<div class="a" style="left:1032px;top:775px;width:105px;height:23px;background:#fff;border-right:1px solid #e4e4e4"></div>
<div class="t ms" style="left:1040px;top:779.5px">A260 (Abs)</div>
<div class="a" style="left:1137px;top:775px;width:105px;height:23px;background:#fff;border-right:1px solid #e4e4e4"></div>
<div class="t ms" style="left:1145px;top:779.5px">A280 (Abs)</div>
<div class="a" style="left:1242px;top:775px;width:85px;height:23px;background:#fff;border-right:1px solid #e4e4e4"></div>
<div class="t ms" style="left:1250px;top:779.5px">260/280</div>
<div class="a" style="left:1327px;top:775px;width:85px;height:23px;background:#fff;border-right:1px solid #e4e4e4"></div>
<div class="t ms" style="left:1335px;top:779.5px">260/230</div>
<div class="a" style="left:1412px;top:775px;width:118px;height:23px;background:#d9e8f7;border-right:1px solid #e4e4e4"></div>
<div class="t ms" style="left:1420px;top:779.5px">Sample Type</div>
<div class="a" style="left:1530px;top:775px;width:75px;height:23px;background:#fff;border-right:1px solid #e4e4e4"></div>
<div class="t ms" style="left:1538px;top:779.5px">Factor</div>
<div class="a" style="left:466px;top:967px;width:1140px;height:21px;background:#0a78d6"></div>
<svg class="a" style="left:0;top:0" width="1920" height="1000" viewBox="0 0 1920 1000"><path d="M466 798.5H1606M466 819.5H1606M466 840.5H1606M466 861.5H1606M466 882.5H1606M466 903.5H1606M466 924.5H1606M466 945.5H1606M466 966.5H1606M506.5 798V988M629.5 798V988M734.5 798V988M862.5 798V988M974.5 798V988M1032.5 798V988M1137.5 798V988M1242.5 798V988M1327.5 798V988M1412.5 798V988M1530.5 798V988M1605.5 798V988" stroke="#9a9a9a" stroke-width="1" fill="none"/></svg>
<div class="t ms" style="left:469px;top:802px;color:#000">13</div>
<div class="t ms" style="left:510px;top:802px;color:#000">C</div>
<div class="t ms" style="left:633px;top:802px;color:#000">TP-SSV</div>
<div class="t ms" style="left:738px;top:802px;color:#000">08.10.2024 09:32</div>
<div class="t ms" style="left:866px;top:802px;color:#000">-0.3</div>
<div class="t ms" style="left:978px;top:802px;color:#000">ng/µl</div>
<div class="t ms" style="left:1036px;top:802px;color:#000">-0.008</div>
<div class="t ms" style="left:1141px;top:802px;color:#000">-0.010</div>
<div class="t ms" style="left:1246px;top:802px;color:#000">0.82</div>
<div class="t ms" style="left:1331px;top:802px;color:#000">0.62</div>
<div class="t ms" style="left:1416px;top:802px;color:#000">RNA</div>
<div class="t ms" style="left:1534px;top:802px;color:#000">40.00</div>
<div class="t ms" style="left:469px;top:823px;color:#000">14</div>
<div class="t ms" style="left:510px;top:823px;color:#000">C03 C04 control</div>
<div class="t ms" style="left:633px;top:823px;color:#000">TP-SSV</div>
<div class="t ms" style="left:738px;top:823px;color:#000">08.10.2024 09:34</div>
<div class="t ms" style="left:866px;top:823px;color:#000">541.8</div>
<div class="t ms" style="left:978px;top:823px;color:#000">ng/µl</div>
<div class="t ms" style="left:1036px;top:823px;color:#000">13.546</div>
<div class="t ms" style="left:1141px;top:823px;color:#000">6.280</div>
<div class="t ms" style="left:1246px;top:823px;color:#000">2.16</div>
<div class="t ms" style="left:1331px;top:823px;color:#000">2.21</div>
<div class="t ms" style="left:1416px;top:823px;color:#000">RNA</div>
<div class="t ms" style="left:1534px;top:823px;color:#000">40.00</div>
<div class="t ms" style="left:469px;top:844px;color:#000">15</div>
<div class="t ms" style="left:510px;top:844px;color:#000">C03</div>
<div class="t ms" style="left:633px;top:844px;color:#000">TP-SSV</div>
<div class="t ms" style="left:738px;top:844px;color:#000">08.10.2024 09:36</div>
<div class="t ms" style="left:866px;top:844px;color:#000">6.3</div>
<div class="t ms" style="left:978px;top:844px;color:#000">ng/µl</div>
<div class="t ms" style="left:1036px;top:844px;color:#000">0.157</div>
<div class="t ms" style="left:1141px;top:844px;color:#000">0.079</div>
<div class="t ms" style="left:1246px;top:844px;color:#000">2.00</div>
<div class="t ms" style="left:1331px;top:844px;color:#000">0.16</div>
<div class="t ms" style="left:1416px;top:844px;color:#000">RNA</div>
<div class="t ms" style="left:1534px;top:844px;color:#000">40.00</div>
<div class="t ms" style="left:469px;top:865px;color:#000">16</div>
<div class="t ms" style="left:510px;top:865px;color:#000">C04</div>
<div class="t ms" style="left:633px;top:865px;color:#000">TP-SSV</div>
<div class="t ms" style="left:738px;top:865px;color:#000">08.10.2024 09:39</div>
<div class="t ms" style="left:866px;top:865px;color:#000">8.9</div>
<div class="t ms" style="left:978px;top:865px;color:#000">ng/µl</div>
<div class="t ms" style="left:1036px;top:865px;color:#000">0.223</div>
<div class="t ms" style="left:1141px;top:865px;color:#000">0.109</div>
<div class="t ms" style="left:1246px;top:865px;color:#000">2.04</div>
<div class="t ms" style="left:1331px;top:865px;color:#000">0.20</div>
<div class="t ms" style="left:1416px;top:865px;color:#000">RNA</div>
<div class="t ms" style="left:1534px;top:865px;color:#000">40.00</div>
<div class="t ms" style="left:469px;top:886px;color:#000">17</div>
<div class="t ms" style="left:510px;top:886px;color:#000">C11 12 15 control</div>
<div class="t ms" style="left:633px;top:886px;color:#000">TP-SSV</div>
<div class="t ms" style="left:738px;top:886px;color:#000">08.10.2024 09:44</div>
<div class="t ms" style="left:866px;top:886px;color:#000">-0.2</div>
<div class="t ms" style="left:978px;top:886px;color:#000">ng/µl</div>
<div class="t ms" style="left:1036px;top:886px;color:#000">-0.005</div>
<div class="t ms" style="left:1141px;top:886px;color:#000">-0.022</div>
<div class="t ms" style="left:1246px;top:886px;color:#000">0.23</div>
<div class="t ms" style="left:1331px;top:886px;color:#000">0.34</div>
<div class="t ms" style="left:1416px;top:886px;color:#000">RNA</div>
<div class="t ms" style="left:1534px;top:886px;color:#000">40.00</div>
<div class="t ms" style="left:469px;top:907px;color:#000">18</div>
<div class="t ms" style="left:510px;top:907px;color:#000">C11 12 15 control</div>
<div class="t ms" style="left:633px;top:907px;color:#000">TP-SSV</div>
<div class="t ms" style="left:738px;top:907px;color:#000">08.10.2024 09:47</div>
<div class="t ms" style="left:866px;top:907px;color:#000">519.2</div>
<div class="t ms" style="left:978px;top:907px;color:#000">ng/µl</div>
<div class="t ms" style="left:1036px;top:907px;color:#000">12.979</div>
<div class="t ms" style="left:1141px;top:907px;color:#000">6.072</div>
<div class="t ms" style="left:1246px;top:907px;color:#000">2.14</div>
<div class="t ms" style="left:1331px;top:907px;color:#000">2.22</div>
<div class="t ms" style="left:1416px;top:907px;color:#000">RNA</div>
<div class="t ms" style="left:1534px;top:907px;color:#000">40.00</div>
<div class="t ms" style="left:469px;top:928px;color:#000">19</div>
<div class="t ms" style="left:510px;top:928px;color:#000">C15</div>
<div class="t ms" style="left:633px;top:928px;color:#000">TP-SSV</div>
<div class="t ms" style="left:738px;top:928px;color:#000">08.10.2024 09:49</div>
<div class="t ms" style="left:866px;top:928px;color:#000">58.4</div>
<div class="t ms" style="left:978px;top:928px;color:#000">ng/µl</div>
<div class="t ms" style="left:1036px;top:928px;color:#000">1.460</div>
<div class="t ms" style="left:1141px;top:928px;color:#000">0.715</div>
<div class="t ms" style="left:1246px;top:928px;color:#000">2.04</div>
<div class="t ms" style="left:1331px;top:928px;color:#000">1.58</div>
<div class="t ms" style="left:1416px;top:928px;color:#000">RNA</div>
<div class="t ms" style="left:1534px;top:928px;color:#000">40.00</div>
<div class="t ms" style="left:469px;top:949px;color:#000">20</div>
<div class="t ms" style="left:510px;top:949px;color:#000">C11</div>
<div class="t ms" style="left:633px;top:949px;color:#000">TP-SSV</div>
<div class="t ms" style="left:738px;top:949px;color:#000">08.10.2024 09:52</div>
<div class="t ms" style="left:866px;top:949px;color:#000">209.2</div>
<div class="t ms" style="left:978px;top:949px;color:#000">ng/µl</div>
<div class="t ms" style="left:1036px;top:949px;color:#000">5.229</div>
<div class="t ms" style="left:1141px;top:949px;color:#000">2.455</div>
<div class="t ms" style="left:1246px;top:949px;color:#000">2.13</div>
<div class="t ms" style="left:1331px;top:949px;color:#000">1.56</div>
<div class="t ms" style="left:1416px;top:949px;color:#000">RNA</div>
<div class="t ms" style="left:1534px;top:949px;color:#000">40.00</div>
<div class="t ms" style="left:469px;top:970px;color:#fff">21</div>
<div class="t ms" style="left:510px;top:970px;color:#fff">C12</div>
<div class="t ms" style="left:633px;top:970px;color:#fff">TP-SSV</div>
<div class="t ms" style="left:738px;top:970px;color:#fff">08.10.2024 09:53</div>
<div class="t ms" style="left:866px;top:970px;color:#fff">182.6</div>
<div class="t ms" style="left:978px;top:970px;color:#fff">ng/µl</div>
<div class="t ms" style="left:1036px;top:970px;color:#fff">4.564</div>
<div class="t ms" style="left:1141px;top:970px;color:#fff">2.193</div>
<div class="t ms" style="left:1246px;top:970px;color:#fff">2.08</div>
<div class="t ms" style="left:1331px;top:970px;color:#fff">1.30</div>
<div class="t ms" style="left:1416px;top:970px;color:#fff">RNA</div>
<div class="t ms" style="left:1534px;top:970px;color:#fff">40.00</div>
<div class="a" style="left:1899px;top:775px;width:17px;height:225px;background:#f0f0f0"></div>
<div class="a" style="left:1907px;top:896px;width:2px;height:87px;background:#858585;border-radius:1px"></div>
<div class="a" style="left:0;top:1007px;width:1920px;height:1px;background:#dcdcdc"></div>
<svg class="a" style="left:51.5px;top:1009.5px" width="16.5" height="17" viewBox="0 0 18 19">
<path d="M9 1C6.5 2.6 4 3.2 1.5 3.2V9C1.5 13.5 5 16.5 9 18C13 16.5 16.500 13.5 16.5 9V3.2C14 3.2 11.500 2.6 9 1Z" fill="#5fbf6a" stroke="#9aa29a" stroke-width="1.6"/>
<path d="M5.200 9.300L8 12L13 6.500" fill="none" stroke="#fff" stroke-width="1.8"/></svg>
<div class="t ui" style="left:1865px;top:1012px;font-size:12px;transform:scaleX(.86);transform-origin:0 0">TP-SSV</div>
<svg class="a" style="left:18px;top:1036px" width="30" height="30" viewBox="0 0 30 30">
<path d="M12 6.500Q13 5 14 6.500L24.500 24.500Q25.300 26.500 23 26.700H3Q0.700 26.500 1.500 24.500Z" fill="#f6c623"/>
<path d="M7.500 19A5.500 5 0 0 1 18.500 19Z" fill="#3a2a10"/><path d="M13 19V23.300A1.400 1.400 0 0 1 10.300 23.500" fill="none" stroke="#3a2a10" stroke-width="1"/>
<circle cx="7" cy="22" r=".8" fill="#3a2a10"/><circle cx="17.500" cy="21" r=".8" fill="#3a2a10"/><circle cx="19" cy="24" r=".8" fill="#3a2a10"/>
<circle cx="20" cy="7.500" r="7.300" fill="#c42b1c"/></svg>
<div class="t" style="left:35px;top:1037.5px;font-size:11px;color:#fff;font-family:"Liberation Sans",sans-serif">1</div>
<div class="t" style="left:50px;top:1039.2px;font-size:12px;color:#1a1a1a;font-family:"Liberation Sans",sans-serif">Rain warning</div>
<div class="t" style="left:50px;top:1055.2px;font-size:12.3px;color:#5a5a5a;font-family:"Liberation Sans",sans-serif">In effect</div>
<svg class="a" style="left:726px;top:1041px" width="25" height="25" viewBox="0 0 25 25"><defs><linearGradient id="wl" x1="0" y1="0" x2="1" y2="1"><stop offset="0" stop-color="#3cc0f0"/><stop offset="1" stop-color="#0a62c8"/></linearGradient></defs>
<path d="M1 1H11.700V11.700H1ZM13 1H23.700V11.700H13ZM1 13H11.700V23.700H1ZM13 13H23.700V23.700H13Z" fill="url(#wl)"/></svg>
<div class="a" style="left:764px;top:1038px;width:218px;height:31px;border-radius:15.500px;background:#f2f5fc;border:1px solid #d0d5e2"></div>
<svg class="a" style="left:773px;top:1044px" width="20" height="20" viewBox="0 0 20 20"><circle cx="8" cy="8" r="5.600" fill="none" stroke="#1f1f1f" stroke-width="1.500"/><path d="M12.200 12.200L16.500 16.500" stroke="#1f1f1f" stroke-width="1.700" stroke-linecap="round"/></svg>
<div class="t" style="left:800px;top:1046.5px;font-size:13px;color:#5c5c5c;font-family:"Liberation Sans",sans-serif">Search</div>
<svg class="a" style="left:930px;top:1042px" width="48" height="22" viewBox="0 0 48 22">
<path d="M1.500 5L11 3.500L12.500 16L3 18Z" fill="#f3ead6" stroke="#a5753f" stroke-width="1"/><path d="M12 3.800L21 4.500L22 16L12.500 16Z" fill="#fbf5e6" stroke="#a5753f" stroke-width="1"/>
<path d="M4 8L10 7M4.400 11L10.400 10M14 7.500L19.500 8M14.300 10.500L20 11" stroke="#b89a72" stroke-width=".8"/>
<circle cx="19.500" cy="5.500" r="4" fill="#f5c518"/>
<path d="M27 4H44V16H27Z" fill="#dfe6f0" stroke="#6c7686" stroke-width="1.300"/><path d="M25 17.500H46L47 20H24Z" fill="#8a93a3"/></svg>
<svg class="a" style="left:994px;top:1041px" width="26" height="26" viewBox="0 0 26 26"><rect x="8.500" y="1.500" width="15" height="15" rx="1.500" fill="#f7f7f7" stroke="#e5e5e5" stroke-width=".6"/><rect x="2" y="8" width="16.500" height="15" rx="1.500" fill="#222"/><rect x="8.500" y="8" width="10" height="8.500" fill="#b8b8b8"/></svg>
<svg class="a" style="left:1082px;top:1040px" width="26" height="26" viewBox="0 0 26 26"><defs><linearGradient id="eg" x1="0" y1="0" x2="0.300" y2="1"><stop offset="0" stop-color="#3aa9e6"/><stop offset="1" stop-color="#0f58a8"/></linearGradient>
<linearGradient id="eg2" x1="0" y1="0" x2="1" y2="1"><stop offset="0" stop-color="#2fc3c0"/><stop offset="1" stop-color="#7fe15a"/></linearGradient></defs>
<circle cx="13" cy="13.300" r="12" fill="url(#eg)"/>
<path d="M3.500 8C6 3 11 1 15.500 1.500C21.500 2.300 25.500 7 25 12.500C24.700 16 22 18.300 19 18.300C16.500 18.300 15 17.200 15 15.500C15 14.300 16 13.600 16 12C16 9.500 13.500 7.500 10.500 7.500C7.500 7.500 5 8.500 3.500 10.500Z" fill="url(#eg2)"/>
<path d="M9.500 11.500C7 15.500 9 22 14.500 24C17.500 25 21 24.300 23.500 21.500C20.500 23 15.500 22.300 13.500 18.500C12.500 16.500 12.600 14 13.800 12.300C12.500 11 10.500 10.700 9.500 11.500Z" fill="#1464b4"/>
<path d="M13.500 13C13 15.500 14 18 16.500 18.800C18.500 19.300 21 18.500 22.500 17C20 18 17 17.500 16.200 15.500C15.800 14.500 16 13.600 16.200 13Z" fill="#dfe6f6"/></svg>
<div class="a" style="left:1120px;top:1034px;width:38px;height:38px;border-radius:4px;background:#eef2fb;border:1px solid #e3e8f4"></div>
<svg class="a" style="left:1127px;top:1041px" width="24" height="24" viewBox="0 0 24 24"><defs><linearGradient id="ai" x1="0" y1="0" x2="1" y2="1"><stop offset="0" stop-color="#a9bbe6"/><stop offset="1" stop-color="#5f79b8"/></linearGradient></defs>
<rect x="0.500" y="0.500" width="23" height="23" fill="url(#ai)"/>
<rect x="1.500" y="1.800" width="21" height="6.200" rx="3" fill="#050505"/><rect x="1.500" y="16.200" width="21" height="6.200" rx="3" fill="#050505"/>
<path d="M4 8H20C17.500 9.500 16.500 10.500 16.500 12C16.500 13.500 17.500 14.500 20 16.200H4C6.500 14.500 7.500 13.500 7.500 12C7.500 10.500 6.500 9.500 4 8Z" fill="#2a2c78"/>
<rect x="9.500" y="10.300" width="5" height="3.400" rx="1" fill="#4a58b0"/><rect x="10.800" y="11.300" width="2.400" height="1.400" fill="#c9d6f4"/></svg>
<div class="a" style="left:1131.500px;top:1069.500px;width:15.500px;height:2.500px;border-radius:1.500px;background:#1a6fd0"></div>
<svg class="a" style="left:1171px;top:1040px" width="26" height="28" viewBox="0 0 26 28">
<defs><linearGradient id="pg" x1="0" y1="0" x2="0" y2="1"><stop offset="0" stop-color="#5cc6f4"/><stop offset="1" stop-color="#1f86d6"/></linearGradient></defs>
<path d="M12 1.500C5 1.500 1 7 1 12.500C1 18 4.500 22 8.500 22C11 22 10.800 19.800 12.300 19C14 18.200 14.800 20 15.200 22C15.800 25.200 19 24.800 19.500 22C20 19 23.500 17 23.500 11C23.500 5 18.500 1.500 12 1.500Z" fill="url(#pg)"/>
<circle cx="5.500" cy="12" r="1.900" fill="#d9532c"/><circle cx="8.500" cy="7" r="1.900" fill="#3fae49"/><circle cx="13.500" cy="5" r="1.900" fill="#f5c518"/>
<path d="M13 10.500l.9 2 2 .9-2 .9-.9 2-.9-2-2-.9 2-.9z" fill="#fff"/>
<rect x="17.300" y="9" width="3.600" height="4" rx=".8" fill="#e9d9b8"/><rect x="17.300" y="12.500" width="3.600" height="1.800" fill="#b9b9b9"/><path d="M17.800 14.300H20.400L19.900 24.500H18.300Z" fill="#b5722e"/></svg>
<div class="a" style="left:1180px;top:1069.500px;width:6px;height:2.500px;border-radius:1.500px;background:#7a7a80"></div>
<svg class="a" style="left:1688px;top:1046px" width="14" height="12" viewBox="0 0 14 12"><path d="M2 9L7 3.800L12 9" fill="none" stroke="#1a1a1a" stroke-width="1.300"/></svg>
<div class="t" style="left:1721.500px;top:1048.3px;font-size:11px;color:#1a1a1a;font-family:"Liberation Sans",sans-serif">ENG</div>
<svg class="a" style="left:1761px;top:1043px" width="20" height="19" viewBox="0 0 20 19" fill="none" stroke="#1a1a1a" stroke-width="1.100">
<rect x="1.500" y="3" width="11.500" height="9.500" rx="1"/><path d="M5 16H10M7.500 12.500V16M10 16H14.500V9.500"/><rect x="13" y="1.500" width="3.400" height="8" rx="1.200" fill="#dde6f6"/><path d="M13 4H16.400"/></svg>
<svg class="a" style="left:1785px;top:1044px" width="20" height="18" viewBox="0 0 20 18" fill="none" stroke="#1a1a1a" stroke-width="1.100">
<path d="M1.500 6.500H4.500L8 3.500V14.500L4.500 11.500H1.500Z"/><path d="M10.500 6.500Q12 9 10.500 11.500M12.800 5Q15.300 9 12.800 13M15.200 3.500Q18.600 9 15.200 14.500"/></svg>
<div class="t" style="right:43px;top:1039.500px;font-size:11.6px;color:#1a1a1a;font-family:"Liberation Sans",sans-serif">09:53</div>
<div class="t" style="right:43px;top:1055.500px;font-size:11.6px;color:#1a1a1a;font-family:"Liberation Sans",sans-serif">08.10.2024</div>
<svg class="a" style="left:1884px;top:1045px" width="16" height="18" viewBox="0 0 16 18"><path d="M8 1C4.500 1 3 3.800 3 6.500V10L1.300 12.800Q1 13.800 2 13.800H14Q15 13.800 14.700 12.800L13 10V6.500C13 3.800 11.500 1 8 1Z" fill="#0a4fb4"/><path d="M5.800 15H10.200A2.200 2.200 0 0 1 5.800 15Z" fill="#0a4fb4"/></svg>
</div></body></html>
